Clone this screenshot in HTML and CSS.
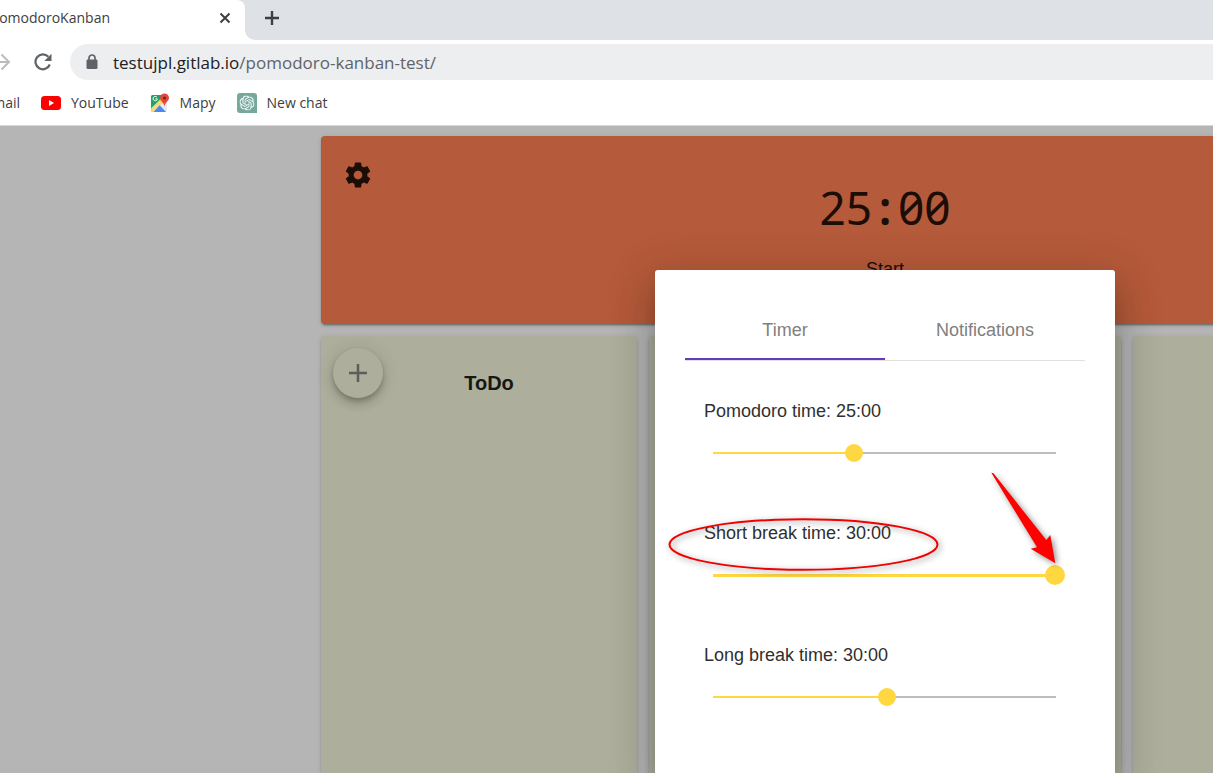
FILE: index.html
```html
<!DOCTYPE html>
<html lang="en">
<head>
<meta charset="utf-8">
<title>PomodoroKanban</title>
<link rel="stylesheet" href="styles.css">
</head>
<body>
<header class="browser">
  <div class="tabstrip">
    <div class="tab-back">
      <div class="tab">
        <span class="tab-title">PomodoroKanban</span>
        <button class="icon-btn tab-close" aria-label="Close tab">
          <svg width="12" height="12" viewBox="0 0 12 12"><path d="M1.5 1.5 10.5 10.5M10.5 1.5 1.5 10.5" stroke="#3c4043" stroke-width="2" fill="none"/></svg>
        </button>
      </div>
    </div>
    <div class="strip-rest">
      <button class="icon-btn" aria-label="New tab">
        <svg width="16" height="16" viewBox="0 0 16 16"><path d="M8 1V15M1 8H15" stroke="#3c4043" stroke-width="2.4" fill="none"/></svg>
      </button>
    </div>
  </div>
  <div class="toolbar">
    <button class="icon-btn forward" aria-label="Forward">
      <svg width="20" height="18" viewBox="0 0 20 18"><path d="M1 9H18M10.5 1.500 18 9 10.500 16.500" stroke="#babcbe" stroke-width="2" fill="none"/></svg>
    </button>
    <button class="icon-btn reload" aria-label="Reload">
      <svg width="18" height="18" viewBox="0 0 18 18"><path d="M15.800 11.500A7.400 7.400 0 1 1 14.300 3.800" stroke="#5f6368" stroke-width="2.200" fill="none"/><path d="M17.500 .8V8H10.300Z" fill="#5f6368"/></svg>
    </button>
    <div class="address">
      <svg width="12" height="16" viewBox="0 0 12 16"><path d="M3 6V4a3 3 0 0 1 6 0v2" stroke="#5f6368" stroke-width="1.700" fill="none"/><rect x=".5" y="5.500" width="11" height="9.500" rx="1.300" fill="#5f6368"/></svg>
      <span class="url"><span class="host">testujpl.gitlab.io</span>/pomodoro-kanban-test/</span>
    </div>
  </div>
  <nav class="bookmarks">
    <a class="clipped" href="#">Gmail</a>
    <a href="#">
      <svg width="20" height="20" viewBox="0 0 20 20"><rect y="3" width="20" height="14" rx="3.500" fill="#f00"/><path d="M8 7 13 10 8 13Z" fill="#fff"/></svg>
      YouTube</a>
    <a href="#">
      <svg width="20" height="20" viewBox="0 0 20 20"><path d="M1 3.500A1.500 1.500 0 0 1 2.500 2H17V17.500A1.500 1.500 0 0 1 15.500 19H2.500A1.500 1.500 0 0 1 1 17.500Z" fill="#e8eaed"/><path d="M1 16V3.500A1.500 1.500 0 0 1 2.500 2H13L15 4Z" fill="#1fa463"/><path d="M1 15.500 13.500 3 17 6 3 19H2.500A1.500 1.500 0 0 1 1 17.500Z" fill="#fbd14b"/><path d="M3.500 19 9.700 12.300 16 19Z" fill="#4a89f4"/><path d="M1 15 9.700 8 17 15V19L9.700 11.500 3 19" fill="#e8eaed" opacity=".35"/><path d="M7.400 5.900H5.400M7 4.300A2.200 2.200 0 1 0 7.400 6" stroke="#fff" stroke-width="1" fill="none"/><path d="M14.500.5A4.500 4.500 0 0 1 19 5C19 8 15.500 8.500 14.500 13.500 13.500 8.500 10 8 10 5A4.500 4.500 0 0 1 14.500.5Z" fill="#e1493d"/><circle cx="14.500" cy="5" r="1.600" fill="#7c231b"/></svg>
      Mapy</a>
    <a href="#">
      <svg width="20" height="20" viewBox="0 0 20 20"><path d="M3 0H17A3 3 0 0 1 20 3V20H3A3 3 0 0 1 0 17V3A3 3 0 0 1 3 0Z" fill="#75a99c"/><svg x="2.500" y="2.500" width="15" height="15" viewBox="0 0 24 24"><path fill="#fff" d="M22.282 9.821a5.985 5.985 0 0 0-.516-4.910 6.046 6.046 0 0 0-6.510-2.900A6.065 6.065 0 0 0 4.981 4.182a5.985 5.985 0 0 0-3.998 2.900 6.046 6.046 0 0 0 .743 7.097 5.980 5.980 0 0 0 .511 4.911 6.051 6.051 0 0 0 6.515 2.900A5.985 5.985 0 0 0 13.260 24a6.056 6.056 0 0 0 5.772-4.206 5.990 5.990 0 0 0 3.998-2.900 6.056 6.056 0 0 0-.748-7.073zM13.260 22.430a4.476 4.476 0 0 1-2.876-1.041l.141-.080 4.779-2.758a.795.795 0 0 0 .392-.681v-6.737l2.020 1.169a.071.071 0 0 1 .038.052v5.582a4.504 4.504 0 0 1-4.494 4.494zM3.600 18.304a4.471 4.471 0 0 1-.535-3.014l.142.085 4.783 2.759a.771.771 0 0 0 .780 0l5.843-3.369v2.332a.080.080 0 0 1-.033.062L9.740 19.950a4.500 4.500 0 0 1-6.140-1.646zM2.341 7.896a4.485 4.485 0 0 1 2.366-1.973V11.600a.766.766 0 0 0 .388.677l5.815 3.354-2.020 1.169a.076.076 0 0 1-.071 0l-4.830-2.786A4.504 4.504 0 0 1 2.341 7.872zm16.596 3.856-5.833-3.388L15.119 7.200a.076.076 0 0 1 .071 0l4.830 2.791a4.494 4.494 0 0 1-.676 8.105v-5.678a.790.790 0 0 0-.407-.667zm2.011-3.024-.142-.085-4.774-2.782a.776.776 0 0 0-.785 0L9.409 9.230V6.897a.066.066 0 0 1 .028-.062l4.830-2.787a4.499 4.499 0 0 1 6.680 4.660zM8.307 12.863l-2.020-1.164a.080.080 0 0 1-.038-.057V6.075a4.499 4.499 0 0 1 7.376-3.454l-.142.081L8.704 5.460a.795.795 0 0 0-.393.681zm1.098-2.365 2.602-1.500 2.607 1.500v2.999l-2.597 1.500-2.607-1.500Z"/></svg></svg>
      New chat</a>
  </nav>
</header>

<main class="page">
  <div class="app">
    <section class="timer">
      <button class="icon-btn settings" aria-label="Settings">
        <svg width="30" height="30" viewBox="0 0 24 24"><path fill="#1b0d08" d="M19.430 12.980c.040-.320.070-.640.070-.980s-.030-.660-.070-.980l2.110-1.650c.190-.150.240-.420.120-.640l-2-3.460c-.120-.220-.390-.300-.610-.220l-2.490 1c-.520-.400-1.080-.730-1.690-.980l-.380-2.650C14.460 2.180 14.250 2 14 2h-4c-.250 0-.460.180-.490.420l-.380 2.650c-.610.250-1.170.590-1.690.980l-2.490-1c-.230-.090-.490 0-.610.220l-2 3.460c-.130.220-.070.490.120.640l2.110 1.650c-.040.320-.070.650-.070.980s.030.660.070.980l-2.110 1.650c-.190.150-.240.420-.120.640l2 3.460c.120.220.390.300.610.220l2.490-1c.520.400 1.080.730 1.690.980l.380 2.650c.030.240.240.420.490.420h4c.250 0 .460-.180.490-.420l.380-2.650c.610-.250 1.170-.590 1.690-.980l2.490 1c.230.090.490 0 .610-.220l2-3.460c.120-.220.070-.490-.120-.640l-2.110-1.650zM12 15.500c-1.930 0-3.500-1.570-3.500-3.500s1.570-3.500 3.500-3.500 3.500 1.570 3.500 3.500-1.570 3.500-3.500 3.500z"/></svg>
      </button>
      <div class="timer-main">
        <div class="clock">25<span class="colon">:</span>00</div>
        <button class="start">Start</button>
      </div>
    </section>
    <div class="board">
      <section class="column">
        <header class="column-head">
          <button class="add" aria-label="Add task">
            <svg width="18" height="18" viewBox="0 0 18 18"><path d="M9 0V18M0 9H18" stroke="#5d5d59" stroke-width="2.500" fill="none"/></svg>
          </button>
          <h2>ToDo</h2>
        </header>
      </section>
      <section class="column"></section>
      <section class="column"></section>
    </div>

    <div class="overlay">
      <div class="dialog" role="dialog" aria-label="Settings">
        <div class="tabs" role="tablist">
          <button class="dialog-tab active" role="tab" aria-selected="true">Timer</button>
          <button class="dialog-tab" role="tab" aria-selected="false">Notifications</button>
        </div>
        <div class="fields">
          <div class="field">
            <label for="pomodoro">Pomodoro time: 25:00</label>
            <input id="pomodoro" type="range" min="0" max="61" value="25" style="--fill:41%">
          </div>
          <div class="field">
            <label for="short">Short break time: 30:00</label>
            <input id="short" class="focused" type="range" min="1" max="30" value="30" style="--fill:100%">
          </div>
          <div class="field">
            <label for="long">Long break time: 30:00</label>
            <input id="long" type="range" min="0" max="59" value="30" style="--fill:51%">
          </div>
        </div>
        <svg class="marks" width="460" height="320" viewBox="0 0 460 320" aria-hidden="true">
          <ellipse cx="148.500" cy="274.500" rx="134" ry="25.300" fill="none" stroke="#f00000" stroke-width="2"/>
          <path d="M336.300 202.700 338.500 203.300 391.300 270 395.300 265 400.300 293.300 375.700 278.700 382 277.300Z" fill="#f00"/>
        </svg>
      </div>
    </div>
  </div>
</main>
</body>
</html>
```

FILE: styles.css
```css
* { box-sizing: border-box; }

body {
  margin: 0;
  height: 100vh;
  display: flex;
  flex-direction: column;
  overflow: hidden;
  font-family: "Liberation Sans", Arial, sans-serif;
  font-size: 18px;
}

button {
  padding: 0;
  border: 0;
  background: none;
  font: inherit;
  color: inherit;
}

svg { display: block; flex: none; }

.icon-btn { display: flex; }

/* Browser frame */
.browser {
  flex: none;
  background: #fff;
  border-bottom: 1px solid #d6d9d9;
  font-family: "Open Sans", "Noto Sans", sans-serif;
  font-size: 14px;
  color: #3c4043;
}

.tabstrip { display: flex; height: 40px; }

.tab-back { width: 245px; background: #dee1e6; }

.tab {
  display: flex;
  align-items: center;
  height: 100%;
  padding: 0 14px 4px 0;
  background: #fff;
  border-top-right-radius: 8px;
}

.tab-title {
  display: flex;
  justify-content: flex-end;
  width: 110px;
  padding-bottom: 2px;
}

.tab-close { margin-left: auto; }

.strip-rest {
  flex: 1;
  display: flex;
  align-items: center;
  padding: 0 19px 4px;
  background: #dee1e6;
  border-bottom-left-radius: 10px;
}

.toolbar {
  display: flex;
  align-items: center;
  height: 44px;
}

.forward { width: 11px; justify-content: flex-end; }

.reload { margin: 0 18px 0 23px; }

.address {
  flex: 1;
  display: flex;
  align-items: center;
  gap: 15px;
  height: 36px;
  padding-left: 16px;
  background: #eceef0;
  border-radius: 18px 0 0 18px;
}

.url { font-size: 17px; color: #5f6368; }
.host { color: #202124; }

.bookmarks {
  display: flex;
  align-items: center;
  gap: 21px;
  height: 41px;
  padding-bottom: 4px;
}

.bookmarks a {
  display: flex;
  align-items: center;
  gap: 10px;
  color: inherit;
  text-decoration: none;
}

.bookmarks .clipped { width: 20px; justify-content: flex-end; }

/* Application */
.page {
  flex: 1;
  min-height: 0;
  padding: 10px 0 0 321px;
  background: #b5b5b5;
  overflow: hidden;
}

.app {
  position: relative;
  display: flex;
  flex-direction: column;
  gap: 12px;
  width: 1128px;
  height: 100%;
}

.timer {
  display: grid;
  grid-template-columns: 1fr auto 1fr;
  height: 188px;
  padding: 24px 22px;
  background: #b55a3a;
  border-radius: 4px;
  box-shadow: 0 3px 1px -2px rgba(0, 0, 0, .2), 0 2px 2px rgba(0, 0, 0, .14), 0 1px 5px rgba(0, 0, 0, .12);
  color: #1b0d08;
}

.settings { align-self: start; justify-self: start; }

.timer-main {
  display: flex;
  flex-direction: column;
  align-items: center;
  gap: 25px;
  padding-top: 22px;
}

.clock {
  display: flex;
  font-family: "Noto Sans", "Open Sans", sans-serif;
  font-size: 46px;
  line-height: 50px;
  font-variant-numeric: slashed-zero;
}

.colon { width: 26px; text-align: center; font-weight: 600; }

.start { line-height: 24px; }

.board {
  flex: 1;
  display: grid;
  grid-template-columns: 316px 1fr 316px;
  gap: 12px;
}

.column {
  background: #aeae9c;
  border-radius: 4px 4px 0 0;
  box-shadow: 0 2px 2px rgba(0, 0, 0, .14), 0 1px 5px rgba(0, 0, 0, .12);
}

.column-head {
  display: flex;
  align-items: center;
  padding: 12px 42px 0 12px;
}

.add {
  display: flex;
  align-items: center;
  justify-content: center;
  width: 50px;
  height: 50px;
  border-radius: 50%;
  background: #aeae9c;
  box-shadow: 0 3px 5px -1px rgba(0, 0, 0, .2), 0 6px 10px rgba(0, 0, 0, .14), 0 1px 18px rgba(0, 0, 0, .12);
}

.column-head h2 {
  flex: 1;
  margin: 0;
  padding-top: 20px;
  text-align: center;
  font-size: 20px;
  line-height: 24px;
  color: #171713;
}

/* Settings dialog */
.overlay {
  position: absolute;
  inset: 134px 0 0;
  display: flex;
  justify-content: center;
}

.dialog {
  position: relative;
  width: 460px;
  padding: 30px 30px 0;
  background: #fff;
  border-radius: 3px 3px 0 0;
  box-shadow: 0 11px 15px -7px rgba(0, 0, 0, .2), 0 24px 38px 3px rgba(0, 0, 0, .14), 0 9px 46px 8px rgba(0, 0, 0, .12);
}

.tabs {
  display: flex;
  border-bottom: 1px solid #e0e0e0;
}

.dialog-tab {
  flex: 1;
  height: 60px;
  padding-top: 2px;
  border-bottom: 2px solid transparent;
  color: #808080;
}

.dialog-tab.active { border-color: #673ab7; }

.fields { padding: 38px 20px 0 19px; }

.field {
  display: flex;
  flex-direction: column;
  gap: 20px;
  height: 122px;
  line-height: 24px;
  color: #303030;
}

.field input {
  --thick: 2px;
  --thumb: 18px;
  appearance: none;
  width: 100%;
  height: 20px;
  margin: 0;
  background:
    linear-gradient(90deg, #ffd740 var(--fill), #bdbdbd var(--fill))
    center / calc(100% - 18px) var(--thick) no-repeat;
}

.field input.focused {
  --thick: 3px;
  --thumb: 20px;
}

.field input::-webkit-slider-thumb {
  appearance: none;
  width: var(--thumb);
  height: var(--thumb);
  border-radius: 50%;
  background: #ffd740;
}

.marks {
  position: absolute;
  top: 0;
  left: 0;
  pointer-events: none;
  filter: drop-shadow(2px 2px 3px rgba(0, 0, 0, .45));
}
```
